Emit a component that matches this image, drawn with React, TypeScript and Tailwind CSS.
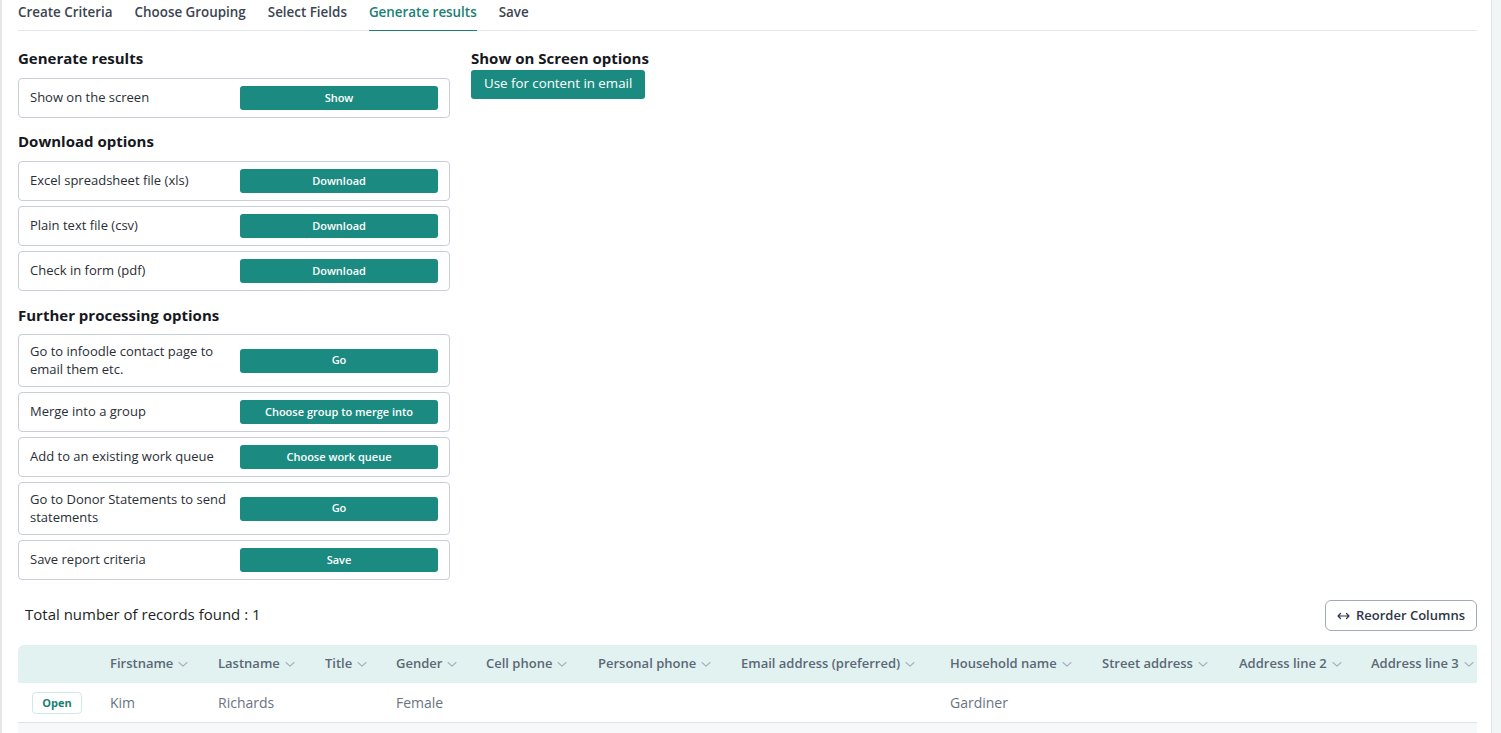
import React from "react";

const F = { fontFamily: "'Open Sans', 'Liberation Sans', sans-serif" };

function Btn({ children }: { children: React.ReactNode }) {
  return (
    <button className="w-[198px] h-[24px] shrink-0 rounded-[3px] bg-[#1b8b82] text-white text-[11px] font-semibold leading-none pb-[2px]">
      {children}
    </button>
  );
}

function Card({ label, btn, tall }: { label: string; btn: string; tall?: boolean }) {
  return (
    <div
      className={`flex items-center justify-between border border-[#c9ced8] rounded-[4px] pl-[11px] pr-[11px] ${
        tall ? "h-[53px]" : "h-[40px]"
      }`}
    >
      <div className="w-[205px] text-[13px] leading-[18px] text-[#2a2e35] -mt-[2px]">{label}</div>
      <Btn>{btn}</Btn>
    </div>
  );
}

function Heading({ children }: { children: React.ReactNode }) {
  return <div className="text-[15px] leading-[22px] font-bold text-[#16181d] -mt-px">{children}</div>;
}

function Chevron() {
  return (
    <svg width="12" height="12" viewBox="0 0 12 12" className="ml-[4px] shrink-0">
      <path d="M2 4.5 L6 8.2 L10 4.5" fill="none" stroke="#a7afb8" strokeWidth="1.1" strokeLinecap="round" strokeLinejoin="round" />
    </svg>
  );
}

const cols = [
  "",
  "Firstname",
  "Lastname",
  "Title",
  "Gender",
  "Cell phone",
  "Personal phone",
  "Email address (preferred)",
  "Household name",
  "Street address",
  "Address line 2",
  "Address line 3",
];

const gridCls =
  "grid grid-cols-[92px_108px_107px_71px_90px_112px_143px_209px_152px_137px_132px_140px]";

export default function App() {
  return (
    <div className="h-[733px] w-[1501px] overflow-hidden bg-white flex" style={F}>
      <div className="w-[2px] shrink-0 bg-[#e6e6e6]" />
      <div className="flex-1 min-w-0 pl-[16px] pr-[14px]">
        {/* Tabs */}
        <div className="flex gap-[22px] h-[31px] border-b border-[#e5e7eb] text-[13.4px] font-semibold text-[#3b4450]">
          <div className="pt-[2px]">Create Criteria</div>
          <div className="pt-[2px]">Choose Grouping</div>
          <div className="pt-[2px]">Select Fields</div>
          <div className="pt-[2px] text-[#1a7f75] border-b border-[#1a7f75] -mb-px">Generate results</div>
          <div className="pt-[2px]">Save</div>
        </div>

        <div className="flex gap-[21px] mt-[17px]">
          <div className="w-[432px] shrink-0">
            <Heading>Generate results</Heading>
            <div className="mt-[9px]">
              <Card label="Show on the screen" btn="Show" />
            </div>
            <div className="mt-[13px]">
              <Heading>Download options</Heading>
            </div>
            <div className="mt-[9px] flex flex-col gap-[5px]">
              <Card label="Excel spreadsheet file (xls)" btn="Download" />
              <Card label="Plain text file (csv)" btn="Download" />
              <Card label="Check in form (pdf)" btn="Download" />
            </div>
            <div className="mt-[14px]">
              <Heading>Further processing options</Heading>
            </div>
            <div className="mt-[8px] flex flex-col gap-[5px]">
              <Card tall label="Go to infoodle contact page to email them etc." btn="Go" />
              <Card label="Merge into a group" btn="Choose group to merge into" />
              <Card label="Add to an existing work queue" btn="Choose work queue" />
              <Card tall label="Go to Donor Statements to send statements" btn="Go" />
              <Card label="Save report criteria" btn="Save" />
            </div>
          </div>
          <div>
            <Heading>Show on Screen options</Heading>
            <button className="mt-px h-[29px] px-[13px] rounded-[3px] bg-[#1b8b82] text-white text-[13.3px] font-medium pb-[2px]">
              Use for content in email
            </button>
          </div>
        </div>

        {/* Results */}
        <div className="mt-[20px] flex items-center justify-between h-[31px]">
          <div className="pl-[7px] text-[15px] text-[#1c1f24] -mt-[2px]">Total number of records found : 1</div>
          <button className="h-[31px] px-[11px] flex items-center gap-[6px] border border-[#a2aab7] rounded-[6px] text-[13px] font-semibold text-[#2e3744]">
            <svg width="13" height="8" viewBox="0 0 13 8">
              <path d="M1 4 H12 M3.5 1.5 L1 4 L3.5 6.5 M9.5 1.5 L12 4 L9.5 6.5" fill="none" stroke="#2e3744" strokeWidth="1.2" strokeLinecap="round" strokeLinejoin="round" />
            </svg>
            Reorder Columns
          </button>
        </div>

        <div className="mt-[14px] overflow-hidden">
          <div className={`${gridCls} h-[38px] items-center bg-[#e2f2f0] rounded-tl-[6px] text-[13px] font-semibold text-[#5b6877]`}>
            {cols.map((c, i) => (
              <div key={i} className="flex items-center whitespace-nowrap">
                {c && (
                  <>
                    {c}
                    <Chevron />
                  </>
                )}
              </div>
            ))}
          </div>
          <div className={`${gridCls} h-[40px] items-center border-b border-[#dfe3e8] text-[14px] text-[#6b7480]`}>
            <div className="pl-[14px]">
              <button className="w-[50px] h-[22px] border border-[#cdeae6] rounded-[4px] text-[11px] font-bold text-[#1a7f75]">
                Open
              </button>
            </div>
            <div>Kim</div>
            <div>Richards</div>
            <div></div>
            <div>Female</div>
            <div></div>
            <div></div>
            <div></div>
            <div>Gardiner</div>
            <div></div>
            <div></div>
            <div></div>
          </div>
          <div className="h-[40px] bg-[#f7f8fa]" />
        </div>
      </div>
      <div className="w-[10px] shrink-0 border-l border-[#e3e6e8] bg-[#f1f5f5]" />
    </div>
  );
}
